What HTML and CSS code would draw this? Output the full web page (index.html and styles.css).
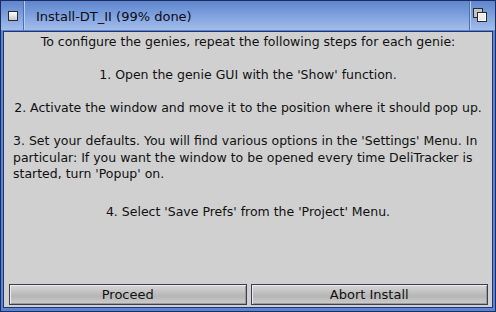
FILE: index.html
```html
<!DOCTYPE html>
<html>
<head>
<meta charset="utf-8">
<link rel="stylesheet" href="styles.css">
</head>
<body>
<div class="window">
  <div class="titlebar">
    <div class="gadget close-gadget"><span class="close-box"></span></div>
    <div class="title">Install-DT_II (99% done)</div>
    <div class="gadget depth-gadget">
      <svg width="15" height="15" viewBox="0 0 15 15">
        <rect x="0.5" y="0.5" width="9" height="9" fill="#c4c4c4" stroke="#2a2a2a"/>
        <rect x="4.5" y="4.5" width="9" height="9" fill="#ececec" stroke="#2a2a2a"/>
        <rect x="5.5" y="5.5" width="7" height="7" fill="none" stroke="#ffffff" stroke-width="1"/>
      </svg>
    </div>
  </div>
  <div class="content">
    <div class="text">
      <p class="center">To configure the genies, repeat the following steps for each genie:</p>
      <p class="center">1. Open the genie GUI with the 'Show' function.</p>
      <p class="center">2. Activate the window and move it to the position where it should pop up.</p>
      <p class="left">3. Set your defaults. You will find various options in the 'Settings' Menu. In<br>particular: If you want the window to be opened every time DeliTracker is<br>started, turn 'Popup' on.</p>
      <p class="center last">4. Select 'Save Prefs' from the 'Project' Menu.</p>
    </div>
    <div class="buttons">
      <button class="btn">Proceed</button>
      <button class="btn">Abort Install</button>
    </div>
  </div>
</div>
</body>
</html>
```
FILE: styles.css
```css
html, body {
  margin: 0;
  padding: 0;
  width: 496px;
  height: 312px;
  overflow: hidden;
  font-family: "DejaVu Sans", sans-serif;
}

.window {
  box-sizing: border-box;
  width: 496px;
  height: 312px;
  border: 1px solid #1d2d63;
  background: #5a84cf;
  display: flex;
  flex-direction: column;
}

.titlebar {
  height: 29px;
  flex: none;
  display: flex;
  align-items: center;
  background: linear-gradient(to bottom, #5f86cc 0%, #7b9edd 45%, #a3bdeb 100%);
  color: #0c0c14;
  font-size: 13px;
}

.gadget {
  height: 100%;
  display: flex;
  align-items: center;
  justify-content: center;
}

.close-gadget {
  width: 22px;
  border-right: 1px solid #4d6fae;
  box-shadow: 1px 0 0 #b8cdf2;
}

.close-box {
  box-sizing: border-box;
  width: 10px;
  height: 10px;
  margin-left: 2px;
  border: 1px solid #2a2a2a;
  background: linear-gradient(to bottom, #ffffff, #c8c8c8);
}

.title {
  flex: 1;
  padding-left: 12px;
  padding-top: 1px;
  white-space: nowrap;
}

.depth-gadget {
  width: 26px;
  border-left: 1px solid #4d6fae;
  box-shadow: inset 1px 0 0 #b8cdf2;
  justify-content: flex-start;
  padding-left: 3px;
  box-sizing: border-box;
}

.depth-gadget svg {
  display: block;
  margin-top: -1px;
}

.content {
  flex: 1;
  margin: 1px 2px 3px 2px;
  border: 1px solid #22376f;
  background: #d0d0d0;
  display: flex;
  flex-direction: column;
  color: #111111;
  font-size: 12.5px;
}

.text {
  flex: 1;
  padding-top: 2px;
  line-height: 16.5px;
}

.text p {
  margin: 0 0 16.5px 0;
  white-space: nowrap;
}

.text .center {
  text-align: center;
}

.text .left {
  padding-left: 9px;
  margin-bottom: 21.5px;
}

.buttons {
  display: flex;
  gap: 4px;
  padding: 0 4px 2px 5px;
}

.btn {
  flex: 1;
  height: 21px;
  box-sizing: border-box;
  border: 1px solid #3e3e52;
  box-shadow: inset 1px 1px 0 #ececec, inset -1px -1px 0 #9a9a9a;
  background: linear-gradient(to bottom, #d8d8d8 0%, #bdbdbd 45%, #b6b6b6 60%, #cdcdcd 100%);
  font-family: "DejaVu Sans", sans-serif;
  font-size: 13px;
  color: #111111;
  padding: 0;
  line-height: 18px;
}
```
